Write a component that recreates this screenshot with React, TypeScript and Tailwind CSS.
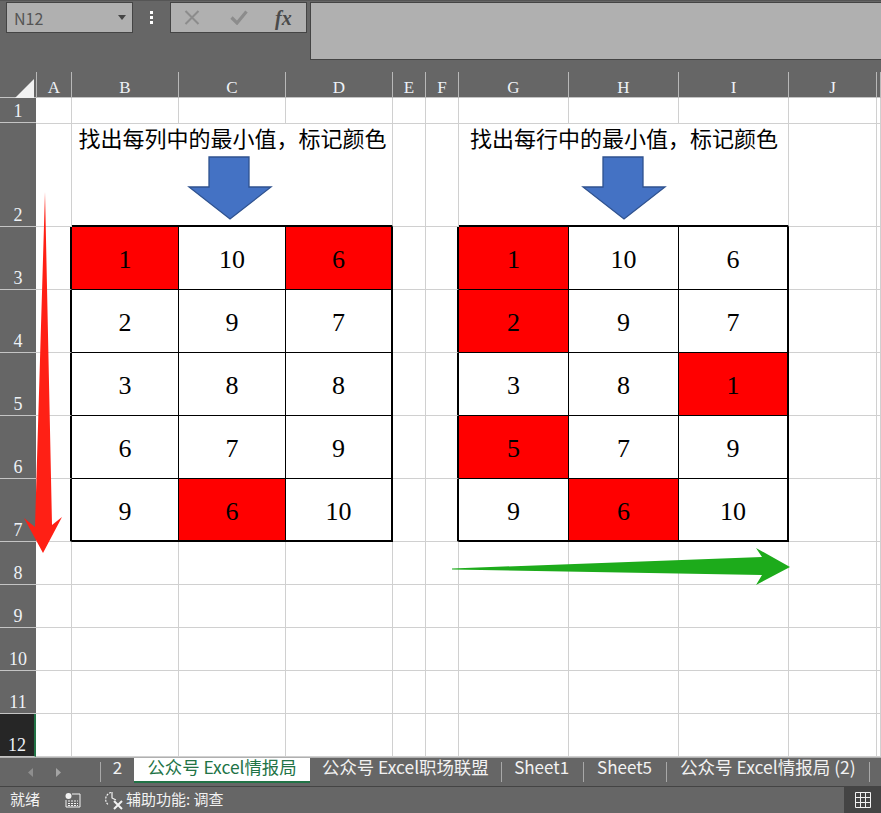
const COLS = ["A", "B", "C", "D", "E", "F", "G", "H", "I", "J", ""];
const GRID_COLS = "grid-cols-[36px_36px_107px_107px_107px_33px_33px_110px_110px_110px_88px_4px]";

const LEFT_TABLE = [
  [1, 10, 6],
  [2, 9, 7],
  [3, 8, 8],
  [6, 7, 9],
  [9, 6, 10],
];
const RIGHT_TABLE = [
  [1, 10, 6],
  [2, 9, 7],
  [3, 8, 1],
  [5, 7, 9],
  [9, 6, 10],
];
// red cells, "row-col"
const LEFT_RED = ["0-0", "0-2", "4-1"];
const RIGHT_RED = ["0-0", "1-0", "2-2", "3-0", "4-1"];

const serif = "font-['Liberation_Serif','Noto_Sans_CJK_SC',serif]";
const sans = "font-['Noto_Sans_CJK_SC','Liberation_Sans',sans-serif]";

function RowHead({ n, h }: { n: number; h: string }) {
  const active = n === 12;
  return (
    <div
      className={`${h} ${serif} flex items-end justify-center text-[18px] leading-[22px] text-[#eef2f7] border-b border-[#c4c4c4] ${
        active ? "bg-[#262626] border-r-2 border-r-[#217346]" : "bg-[#666666]"
      }`}
    >
      {n}
    </div>
  );
}

function Blank({ right = "border-r-[#d0d0d0]", rightW = "border-r" }: { right?: string; rightW?: string }) {
  return <div className={`bg-white border-b border-b-[#d0d0d0] ${rightW} ${right}`} />;
}

function BlankRow({ n }: { n: number }) {
  return (
    <>
      <RowHead n={n} h="h-[43px]" />
      {COLS.map((c) => (
        <Blank key={c || "K"} />
      ))}
    </>
  );
}

function NumCell({ value, red, right, bottom }: { value: number; red: boolean; right: string; bottom: string }) {
  return (
    <div
      className={`${serif} flex items-center justify-center pt-[3px] text-[26px] text-black border-black ${right} ${bottom} ${
        red ? "bg-[#ff0000]" : "bg-white"
      }`}
    >
      {value}
    </div>
  );
}

function TableRow({ r }: { r: number }) {
  const bottom = r === 4 ? "border-b-2" : "border-b";
  return (
    <>
      <RowHead n={r + 3} h="h-[63px]" />
      <Blank right="border-r-black" rightW="border-r-2" />
      {LEFT_TABLE[r].map((v, c) => (
        <NumCell
          key={c}
          value={v}
          red={LEFT_RED.includes(`${r}-${c}`)}
          right={c === 2 ? "border-r-2" : "border-r"}
          bottom={bottom}
        />
      ))}
      <Blank />
      <Blank right="border-r-black" rightW="border-r-2" />
      {RIGHT_TABLE[r].map((v, c) => (
        <NumCell
          key={c}
          value={v}
          red={RIGHT_RED.includes(`${r}-${c}`)}
          right={c === 2 ? "border-r-2" : "border-r"}
          bottom={bottom}
        />
      ))}
      <Blank />
      <Blank />
    </>
  );
}

function Title({ text }: { text: string }) {
  return (
    <div
      className={`${sans} col-span-3 bg-white border-r border-r-[#d0d0d0] border-b-2 border-b-black pl-[1px] text-center text-[22px] leading-[26px] text-black whitespace-nowrap`}
    >
      {text}
    </div>
  );
}

function DownArrow({ className }: { className: string }) {
  return (
    <svg className={`absolute ${className}`} width="86" height="66" viewBox="0 0 86 66">
      <path d="M22 1H62V31H84L43 63 2 31H22Z" fill="#4472c4" stroke="#2f528f" strokeWidth="1.3" />
    </svg>
  );
}

function Divider() {
  return <div className="w-px h-[20px] mt-[4px] bg-[#a8a8a8] shrink-0" />;
}

export default function App() {
  return (
    <div className="w-[881px] h-[813px] overflow-hidden flex flex-col bg-[#666666]">
      {/* FORMULA BAR */}
      <div className="h-[72px] shrink-0 flex items-start pt-[2px] pl-[6px] border-t border-[#555555]">
        <div className={`${sans} w-[127px] h-[31px] -mt-px flex items-center justify-between pl-[7px] pr-[6px] bg-[#b0b0b0] border border-[#444444] text-[16px] text-[#555555]`}>
          N12
          <svg width="8" height="5" viewBox="0 0 8 5">
            <path d="M0 0H8L4 5Z" fill="#444444" />
          </svg>
        </div>
        <div className="w-[37px] h-[31px] -mt-px flex flex-col items-center justify-center gap-[2px]">
          <span className="w-[3px] h-[3px] bg-white" />
          <span className="w-[3px] h-[3px] bg-white" />
          <span className="w-[3px] h-[3px] bg-white" />
        </div>
        <div className="w-[137px] h-[31px] -mt-px flex items-center bg-[#b0b0b0] border border-[#444444] text-[#8c8c8c]">
          <svg className="ml-[13px]" width="16" height="15" viewBox="0 0 16 15">
            <path d="M1.5 1 14.5 14M14.5 1 1.5 14" stroke="#8c8c8c" strokeWidth="2" fill="none" />
          </svg>
          <svg className="ml-[30px]" width="18" height="15" viewBox="0 0 18 15">
            <path d="M1.5 7.5 7 13 16.5 1.5" stroke="#8c8c8c" strokeWidth="3.2" fill="none" />
          </svg>
          <span className={`${serif} ml-[27px] italic font-bold text-[20px] leading-none text-[#4a4a4a]`}>fx</span>
        </div>
        <div className="ml-[3px] flex-1 h-[58px] -mt-px bg-[#b0b0b0] border border-[#444444] border-r-0" />
      </div>

      {/* COLUMN HEADER */}
      <div className={`grid ${GRID_COLS} h-[26px] shrink-0 border-b border-[#c4c4c4]`}>
        <div className="flex items-end pl-[15px] pb-[3px]">
          <svg width="19" height="19" viewBox="0 0 19 19">
            <path d="M19 0V19H0Z" fill="#f2f2f2" />
          </svg>
        </div>
        {COLS.map((c, i) => (
          <div
            key={c || "K"}
            className={`${serif} flex items-center justify-center pt-[3px] text-[17px] text-[#eef2f7] ${
              i === 0 ? "border-x border-[#b8b8b8]" : "border-r border-[#b8b8b8]"
            }`}
          >
            {c}
          </div>
        ))}
      </div>

      {/* SHEET */}
      <div className="relative h-[659px] shrink-0 overflow-hidden">
        <div className={`grid ${GRID_COLS} grid-rows-[26px_103px_repeat(5,63px)_repeat(5,43px)]`}>
          <RowHead n={1} h="h-[25px]" />
          {COLS.map((c) => (
            <Blank key={c || "K"} />
          ))}

          <RowHead n={2} h="h-[103px]" />
          <Blank />
          <Title text="找出每列中的最小值，标记颜色" />
          <Blank />
          <Blank />
          <Title text="找出每行中的最小值，标记颜色" />
          <Blank />
          <Blank />

          {[0, 1, 2, 3, 4].map((r) => (
            <TableRow key={r} r={r} />
          ))}

          {[8, 9, 10, 11, 12].map((n) => (
            <BlankRow key={n} n={n} />
          ))}
        </div>

        {/* shapes floating over the cells */}
        <DownArrow className="left-[187px] top-[58px]" />
        <DownArrow className="left-[581px] top-[58px]" />
        <svg className="absolute left-[20px] top-[90px]" width="46" height="370" viewBox="0 0 46 370">
          <path d="M25 4 32 337 42 329 23 365 4 330 15 339Z" fill="#ff2015" />
        </svg>
        <svg className="absolute left-[450px] top-[445px]" width="345" height="45" viewBox="0 0 345 45">
          <path d="M2 25.5 312 14 306 5 340 24 306 42 312 32 2 26.5Z" fill="#1dab1b" />
        </svg>
      </div>

      {/* TABS */}
      <div className={`${sans} h-[28px] shrink-0 flex items-start border-t border-[#b0b0b0] border-b border-b-[#444444] text-[17.4px] leading-[18px] text-[#f2f2f2] box-content`}>
        <div className="w-[100px] h-[27px] flex items-center shrink-0 pl-[28px] pt-[2px] gap-[23px]">
          <svg width="5" height="9" viewBox="0 0 5 9">
            <path d="M5 0V9L0 4.5Z" fill="#8e8e8e" />
          </svg>
          <svg width="5" height="9" viewBox="0 0 5 9">
            <path d="M0 0V9L5 4.5Z" fill="#a4a4a4" />
          </svg>
        </div>
        <div className="flex items-start gap-[6px]">
          <Divider />
          <span className="w-[21px] text-center text-[17px]">2</span>
        </div>
        <div className="ml-[6px] w-[176px] h-[23px] box-content border-b-2 border-[#217346] bg-white text-center text-[#217346]">
          公众号 Excel情报局
        </div>
        <div className="flex items-start gap-[13.5px] whitespace-nowrap">
          <span className="ml-[12px] -mr-[1.5px]">公众号 Excel职场联盟</span>
          <Divider />
          <span className="-ml-px text-[17px]">Sheet1</span>
          <Divider />
          <span className="text-[17px]">Sheet5</span>
          <Divider />
          <span className="text-[17.5px]">公众号 Excel情报局 (2)</span>
          <Divider />
        </div>
      </div>

      {/* STATUS BAR */}
      <div className={`${sans} flex-1 flex items-center text-[15px] text-[#f2f2f2]`}>
        <span className="ml-[10px] -mt-[2px]">就绪</span>
        <svg className="ml-[25px]" width="16" height="15" viewBox="0 0 16 15">
          <circle cx="3.5" cy="3" r="3" fill="#f2f2f2" />
          <path d="M7 1H15V14H1V7" stroke="#f2f2f2" fill="none" />
          <path d="M3 8H13M3 10.5H13M3 12.5H13" stroke="#f2f2f2" strokeDasharray="2 1" />
        </svg>
        <svg className="ml-[23px]" width="20" height="20" viewBox="0 0 20 20">
          <path d="M7 2.5A7 7 0 0 0 4 14.5" stroke="#f2f2f2" strokeWidth="1.2" strokeDasharray="2 1.2" fill="none" />
          <path d="M8 2V8L12 10" stroke="#f2f2f2" strokeWidth="1.2" fill="none" />
          <path d="M10 11 18 19M18 11 10 19" stroke="#f2f2f2" strokeWidth="2" fill="none" />
        </svg>
        <span className="ml-[2px] -mt-[2px]">辅助功能: 调查</span>
        <div className="ml-auto w-[37px] h-full bg-[#444444] flex items-center justify-center">
          <svg width="16" height="16" viewBox="0 0 16 16">
            <path d="M.5.5H15.5V15.5H.5ZM.5 5.5H15.5M.5 10.5H15.5M5.5.5V15.5M10.5.5V15.5" stroke="#f2f2f2" fill="none" />
          </svg>
        </div>
      </div>
    </div>
  );
}
